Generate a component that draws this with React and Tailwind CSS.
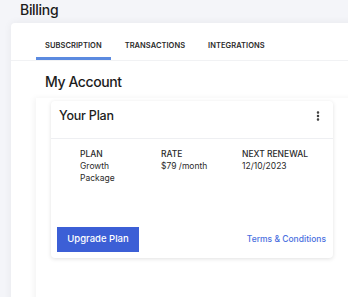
import { MoreVertical } from "lucide-react";

const tabs = ["SUBSCRIPTION", "TRANSACTIONS", "INTEGRATIONS"];

const details = [
  { label: "PLAN", value: ["Growth", "Package"] },
  { label: "RATE", value: ["$79 /month"] },
  { label: "NEXT RENEWAL", value: ["12/10/2023"] },
];

export default function App() {
  return (
    <div
      className="w-[348px] h-[297px] overflow-hidden bg-[#f4f5f9] text-[#1c1c1c]"
      style={{ fontFamily: "Inter, 'Open Sans', sans-serif" }}
    >
      <h1 className="pl-[20px] pt-[1px] h-[23px] text-[14px] font-medium tracking-[-0.3px] leading-[18px]">Billing</h1>

      <div className="ml-[11px] w-[400px] h-[300px] bg-white shadow-[0_0_8px_rgba(0,0,0,0.06)] rounded-tl-[4px]">
        {/* tabs */}
        <div className="flex pl-[25px] pt-[14px] border-b border-[#f1f2f4]">
          {tabs.map((t, i) => (
            <div
              key={t}
              className={`px-[9px] mr-[5px] h-[23px] text-[7.5px] font-semibold tracking-[0.05px] text-[#2a2a2a] ${
                i === 0 ? "border-b-[3px] border-[#5b8ae0]" : ""
              }`}
            >
              <span className="leading-[18px]">{t}</span>
            </div>
          ))}
        </div>

        <h2 className="pl-[34px] pt-[11px] text-[14px] font-medium tracking-[-0.4px] leading-[20px]">My Account</h2>

        {/* nested area */}
        <div className="ml-[25px] mt-[6px] h-[220px] bg-white shadow-[-2px_0_6px_rgba(0,0,0,0.05)] pl-[15px] pt-[3px]">
          <div className="w-[282px] rounded-[4px] bg-white shadow-[0_1px_4px_rgba(0,0,0,0.12)]">
            <div className="flex items-start justify-between h-[38px] pl-[8px] pr-[9px] pt-[6px] border-b border-[#eeeff2]">
              <span className="text-[12.5px] font-medium tracking-[-0.2px] leading-[18px]">Your Plan</span>
              <MoreVertical className="w-[12px] h-[12px] mt-[3px] text-[#333]" strokeWidth={3} />
            </div>

            <div className="flex pl-[29px] pt-[9px] h-[88px] text-[8.5px] leading-[12px] text-[#2a2a2a]">
              {details.map((d) => (
                <div key={d.label} className="w-[81px]">
                  <div className="font-medium">{d.label}</div>
                  {d.value.map((v) => (
                    <div key={v}>{v}</div>
                  ))}
                </div>
              ))}
            </div>

            <div className="flex items-center justify-between pl-[6px] pr-[7px] pb-[6px]">
              <button className="w-[82px] h-[25px] bg-[#3c5fd6] text-white text-[9.5px] font-medium">
                Upgrade Plan
              </button>
              <a className="text-[8.5px] font-medium text-[#4a6fe0]">Terms &amp; Conditions</a>
            </div>
          </div>
        </div>
      </div>
    </div>
  );
}
